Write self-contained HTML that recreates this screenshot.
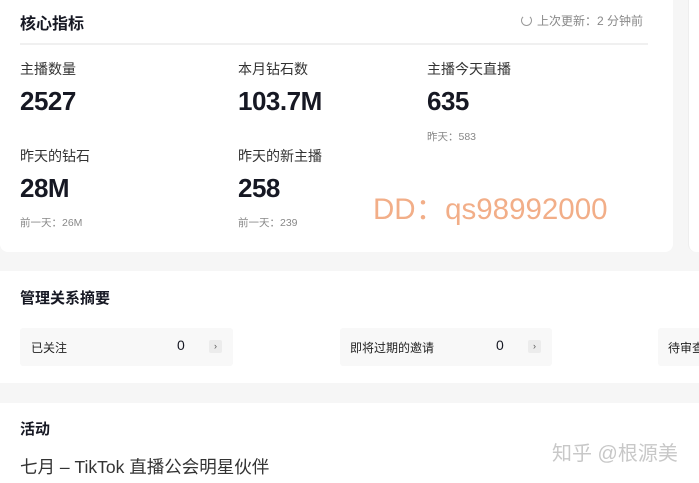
<!DOCTYPE html>
<html><head><meta charset="utf-8"><style>
*{margin:0;padding:0;box-sizing:border-box}
body{width:699px;height:479px;overflow:hidden;background:#f6f6f6;font-family:"Liberation Sans","Noto Sans CJK SC",sans-serif;color:#161823;position:relative}
.a{position:absolute;white-space:nowrap}
.card{position:absolute;background:#fff}
.lbl{font-size:14px;color:#333}
.num{font-size:26px;font-weight:bold;color:#161823;letter-spacing:-0.5px}
.sm{font-size:10.5px;color:#888}
.box{position:absolute;top:328px;height:38px;background:#f8f8f8;border-radius:3px}
.chev{position:absolute;width:13px;height:13px;background:#ececec;border-radius:2px;font-size:9px;color:#555;text-align:center;line-height:13px}
</style></head><body>
<div class="card" style="left:0;top:-10px;width:673px;height:262px;border-radius:8px"></div>
<div class="card" style="left:688px;top:-10px;width:20px;height:262px;border-radius:8px;border-left:1px solid #eee"></div>
<div class="a" style="left:20px;top:10px;font-size:16px;font-weight:bold">核心指标</div>
<div class="a" style="left:521px;top:12px;font-size:12px;color:#888"><span style="display:inline-block;width:11px;height:11px;border:1.3px solid #999;border-radius:50%;border-top-color:transparent;vertical-align:-1px;margin-right:5px"></span>上次更新：2 分钟前</div>
<div class="a" style="left:20px;top:43px;width:628px;height:2px;background:#f0f0f0"></div>
<div class="a lbl" style="left:20px;top:59px">主播数量</div>
<div class="a lbl" style="left:238px;top:59px">本月钻石数</div>
<div class="a lbl" style="left:427px;top:59px">主播今天直播</div>
<div class="a num" style="left:20px;top:86px">2527</div>
<div class="a num" style="left:238px;top:86px">103.7M</div>
<div class="a num" style="left:427px;top:86px">635</div>
<div class="a sm" style="left:427px;top:129px">昨天：583</div>
<div class="a lbl" style="left:20px;top:146px">昨天的钻石</div>
<div class="a lbl" style="left:238px;top:146px">昨天的新主播</div>
<div class="a num" style="left:20px;top:173px">28M</div>
<div class="a num" style="left:238px;top:173px">258</div>
<div class="a sm" style="left:20px;top:215px">前一天：26M</div>
<div class="a sm" style="left:238px;top:215px">前一天：239</div>
<div class="a" style="left:373px;top:186px;font-size:29.5px;color:#f2ae88">DD：qs98992000</div>

<div class="card" style="left:0;top:271px;width:699px;height:112px"></div>
<div class="a" style="left:20px;top:287px;font-size:15px;font-weight:bold">管理关系摘要</div>
<div class="box" style="left:20px;width:213px"></div>
<div class="a" style="left:31px;top:339px;font-size:12px;color:#222">已关注</div>
<div class="a" style="left:177px;top:337px;font-size:14px">0</div>
<div class="chev" style="left:209px;top:340px">›</div>
<div class="box" style="left:340px;width:212px"></div>
<div class="a" style="left:350px;top:339px;font-size:12px;color:#222">即将过期的邀请</div>
<div class="a" style="left:496px;top:337px;font-size:14px">0</div>
<div class="chev" style="left:528px;top:340px">›</div>
<div class="box" style="left:658px;width:60px"></div>
<div class="a" style="left:668px;top:339px;font-size:12px;color:#222">待审查</div>

<div class="card" style="left:0;top:403px;width:699px;height:80px"></div>
<div class="a" style="left:20px;top:418px;font-size:15px;font-weight:bold">活动</div>
<div class="a" style="left:20px;top:454px;font-size:17.5px;color:#333">七月 – TikTok 直播公会明星伙伴</div>
<div class="a" style="left:552px;top:437px;font-size:20px;color:#c8c8c8">知乎 @根源美</div>
</body></html>
